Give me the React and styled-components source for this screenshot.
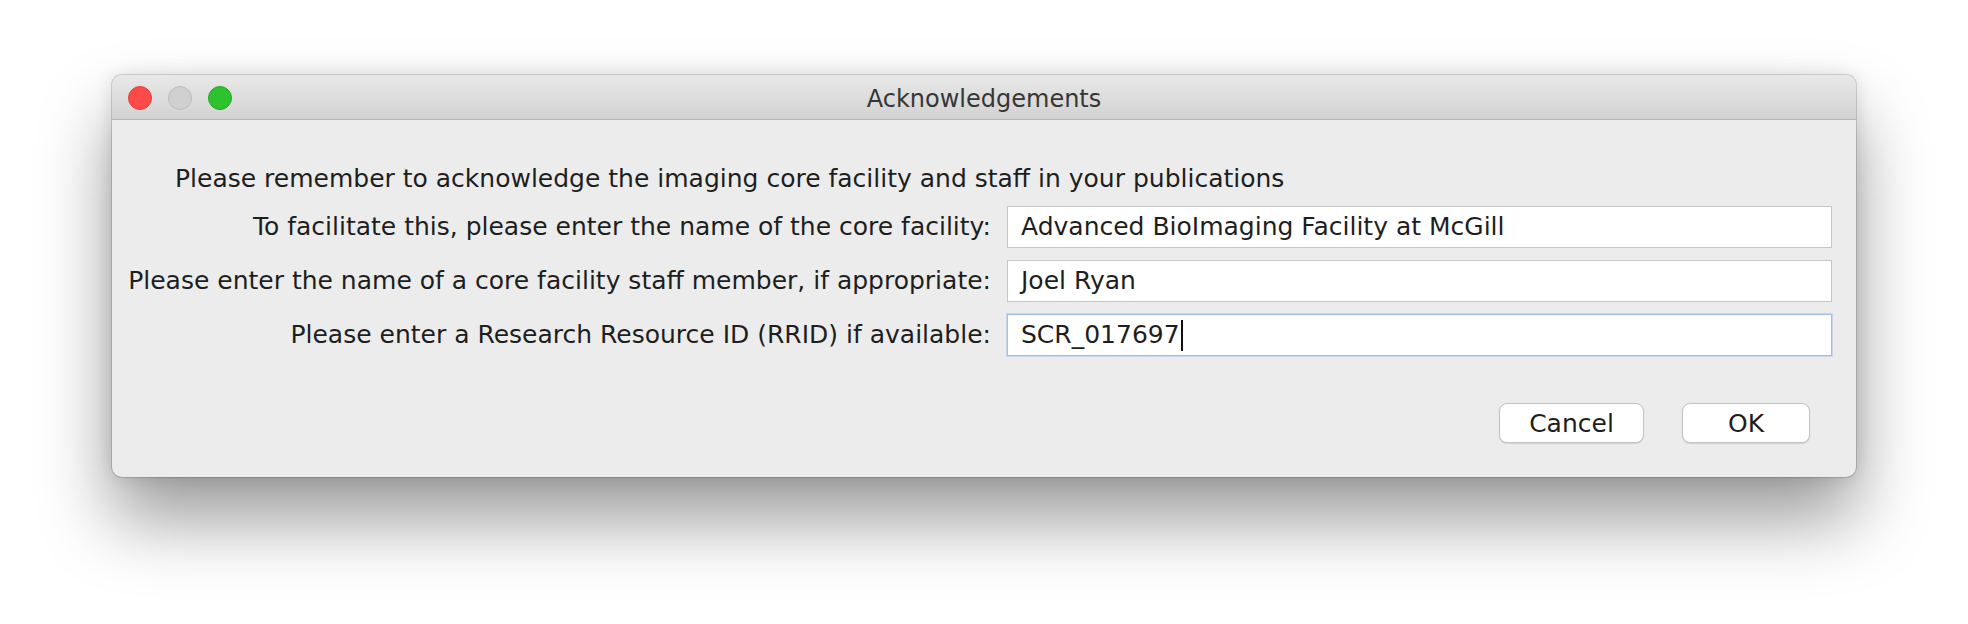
import styled, { createGlobalStyle } from "styled-components";

const GlobalStyle = createGlobalStyle`
  html, body {
    margin: 0;
    padding: 0;
    background: #ffffff;
  }
  body {
    font-family: "DejaVu Sans", "Liberation Sans", sans-serif;
    color: #1e1e1e;
  }
`;

const fields = [
  {
    label: "To facilitate this, please enter the name of the core facility:",
    value: "Advanced BioImaging Facility at McGill",
  },
  {
    label: "Please enter the name of a core facility staff member, if appropriate:",
    value: "Joel Ryan",
  },
  {
    label: "Please enter a Research Resource ID (RRID) if available:",
    value: "SCR_017697",
    focused: true,
  },
];

const App = () => {
  return (
    <StyledPage>
      <GlobalStyle />
      <StyledWindow>
        <StyledTitleBar>
          <StyledLights>
            <StyledLight $color="#ff4b47" $border="#e0403c" />
            <StyledLight $color="#d0d0d0" $border="#bcbcbc" />
            <StyledLight $color="#2fc22f" $border="#27a627" />
          </StyledLights>
          <StyledTitle>Acknowledgements</StyledTitle>
        </StyledTitleBar>
        <StyledBody>
          <StyledIntro>
            Please remember to acknowledge the imaging core facility and staff
            in your publications
          </StyledIntro>
          <StyledForm>
            {fields.map((f) => (
              <StyledRow key={f.label}>
                <StyledLabel>{f.label}</StyledLabel>
                <StyledField $focused={f.focused}>
                  {f.value}
                  {f.focused && <StyledCaret />}
                </StyledField>
              </StyledRow>
            ))}
          </StyledForm>
          <StyledButtons>
            <StyledButton $width={145}>Cancel</StyledButton>
            <StyledButton $width={128}>OK</StyledButton>
          </StyledButtons>
        </StyledBody>
      </StyledWindow>
    </StyledPage>
  );
};

const StyledPage = styled.div`
  width: 1968px;
  height: 624px;
  padding: 75px 0 0 112px;
  box-sizing: border-box;
  overflow: hidden;
`;

const StyledWindow = styled.div`
  width: 1744px;
  height: 402px;
  border-radius: 10px;
  background: #ececec;
  overflow: hidden;
  box-shadow: 0 42px 72px rgba(0, 0, 0, 0.4), 0 0 18px rgba(0, 0, 0, 0.12),
    0 0 0 1px rgba(0, 0, 0, 0.14);
  display: flex;
  flex-direction: column;
`;

const StyledTitleBar = styled.div`
  height: 44px;
  flex: none;
  display: flex;
  align-items: center;
  justify-content: center;
  position: relative;
  background: linear-gradient(#e8e8e8, #d2d2d2);
  border-bottom: 1px solid #b3b3b3;
`;

const StyledLights = styled.div`
  position: absolute;
  left: 16px;
  top: 11px;
  display: flex;
  gap: 16px;
`;

const StyledLight = styled.div`
  width: 24px;
  height: 24px;
  border-radius: 50%;
  box-sizing: border-box;
  background: ${(p) => p.$color};
  border: 1px solid ${(p) => p.$border};
`;

const StyledTitle = styled.div`
  font-size: 24px;
  line-height: 28px;
  padding-top: 3px;
  color: #363636;
`;

const StyledBody = styled.div`
  flex: 1;
  display: flex;
  flex-direction: column;
  padding: 44px 24px 0 23px;
  font-size: 25px;
  line-height: 30px;
`;

const StyledIntro = styled.div`
  padding-left: 40px;
  white-space: nowrap;
`;

const StyledForm = styled.div`
  margin-top: 12px;
  display: flex;
  flex-direction: column;
  gap: 12px;
`;

const StyledRow = styled.div`
  display: grid;
  grid-template-columns: 856px 1fr;
  column-gap: 16px;
  align-items: center;
`;

const StyledLabel = styled.div`
  display: flex;
  justify-content: flex-end;
  white-space: nowrap;
`;

const StyledField = styled.div`
  height: 42px;
  box-sizing: border-box;
  background: #ffffff;
  border: 1px solid ${(p) => (p.$focused ? "#9ebfe9" : "#c6c6c6")};
  box-shadow: ${(p) =>
    p.$focused ? "0 0 0 1px rgba(158, 191, 233, 0.45)" : "none"};
  padding: 0 13px;
  display: flex;
  align-items: center;
  white-space: nowrap;
`;

const StyledCaret = styled.span`
  display: inline-block;
  width: 2px;
  height: 31px;
  margin-left: 1px;
  background: #111111;
`;

const StyledButtons = styled.div`
  margin-top: 47px;
  display: flex;
  justify-content: flex-end;
  gap: 38px;
  padding-right: 22px;
`;

const StyledButton = styled.button`
  width: ${(p) => p.$width}px;
  height: 40px;
  border-radius: 8px;
  border: 1px solid #c2c2c2;
  background: #ffffff;
  box-shadow: 0 1px 1px rgba(0, 0, 0, 0.12);
  font-family: inherit;
  font-size: 25px;
  color: #1e1e1e;
  padding: 0;
  cursor: pointer;
`;

export default App;
